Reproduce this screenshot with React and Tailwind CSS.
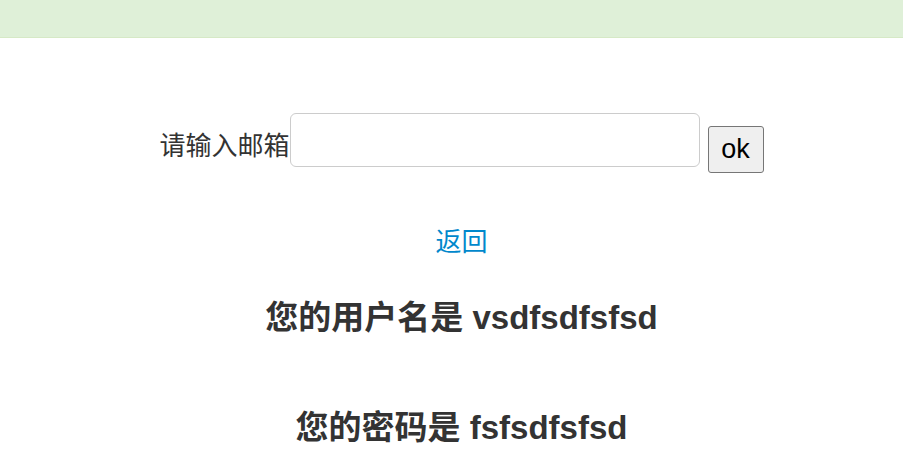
import React from 'react';

const font = { fontFamily: '"Liberation Sans", "Noto Sans CJK SC", sans-serif' };

export default function App() {
  return (
    <div className="min-h-screen bg-white text-[#333]" style={font}>
      {/* Top bar */}
      <div className="h-[38px] bg-[#dff0d8] border-b border-[#d6e9c6]" />

      <div className="flex flex-col items-center pl-[20px]">
        {/* Email form */}
        <div className="mt-[75px] flex items-start">
          <label className="mt-[18px] text-[26px] leading-[30px] text-[#333]">请输入邮箱</label>
          <input
            type="text"
            className="w-[410px] h-[54px] rounded-[6px] border border-[#ccc] bg-white px-3 outline-none"
          />
          <button className="ml-[8px] mt-[13px] w-[56px] h-[47px] rounded-[3px] border border-[#767676] bg-[#efefef] text-[27px] leading-none text-black">
            ok
          </button>
        </div>

        <a href="#" className="mt-[54px] text-[26px] leading-[30px] text-[#0088cc]">
          返回
        </a>

        <h2 className="mt-[41px] text-[33px] leading-[40px] font-bold text-[#333]">
          您的用户名是 vsdfsdfsfsd
        </h2>

        <h2 className="mt-[70px] text-[33px] leading-[40px] font-bold text-[#333]">
          您的密码是 fsfsdfsfsd
        </h2>
      </div>
    </div>
  );
}
